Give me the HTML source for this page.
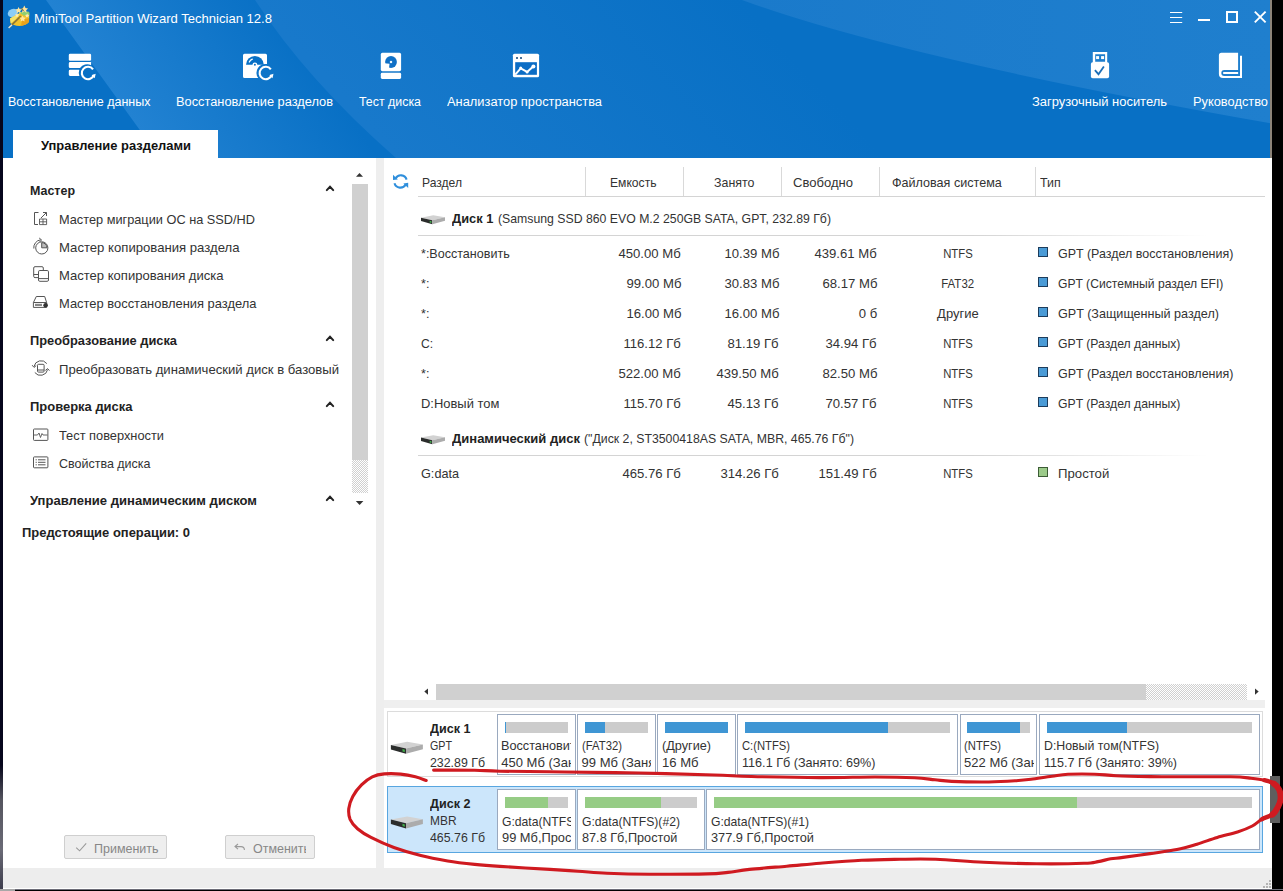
<!DOCTYPE html>
<html lang="ru"><head><meta charset="utf-8"><title>MiniTool Partition Wizard Technician 12.8</title>
<style>
html,body{margin:0;padding:0;}
body{width:1283px;height:891px;overflow:hidden;background:#000;position:relative;font-family:"Liberation Sans",sans-serif;}
.a{position:absolute;}
.t{position:absolute;white-space:pre;line-height:20px;height:20px;}
.clip{position:absolute;left:0;top:0;height:891px;overflow:hidden;}
#win{position:absolute;left:3px;top:0;width:1269px;height:888px;background:#fff;overflow:hidden;}
svg{position:absolute;overflow:visible;}
.pbox{position:absolute;box-sizing:border-box;border:1px solid #9aa9bf;background:#fff;}
.bar{position:absolute;height:11px;background:#ccc;}
.bar i{position:absolute;left:0;top:0;height:100%;display:block;}
.sq{position:absolute;left:1038px;width:8px;height:8px;border:1px solid #1d3c5c;background:#4a9bd6;}
.hl{position:absolute;height:1px;background:#d4d4d4;}
.vl{position:absolute;width:1px;background:#d9d9d9;top:167px;height:29px;}
</style></head><body>
<!-- left desktop strip -->
<div class="a" style="left:0;top:0;width:3px;height:891px;background:linear-gradient(#06061c 0,#06061c 765px,#55555f 800px,#6a6a76 850px,#3a3a4a 891px)"></div>
<!-- window -->
<div class="a" style="left:3px;top:0;width:1269px;height:889px;background:#fff"></div>
<div class="a" style="left:0;top:889px;width:1283px;height:1px;background:#6d6d78"></div>
<div class="a" style="left:0;top:889px;width:15px;height:2px;background:#a8a8a8"></div>
<!-- header -->
<svg style="left:3px;top:0" width="1269" height="158" viewBox="3 0 1269 158">
 <defs>
  <linearGradient id="g1" gradientUnits="userSpaceOnUse" x1="46" y1="0" x2="190" y2="-104"><stop offset="0" stop-color="#2282d2"/><stop offset="1" stop-color="#0870c5"/></linearGradient>
  <linearGradient id="g2" gradientUnits="userSpaceOnUse" x1="255" y1="0" x2="520" y2="-242"><stop offset="0" stop-color="#1879cb"/><stop offset="1" stop-color="#0870c5"/></linearGradient>
  <linearGradient id="g3" x1="0" y1="0" x2="1" y2="0"><stop offset="0" stop-color="#1a7acb"/><stop offset="1" stop-color="#1f7fce"/></linearGradient>
 </defs>
 <rect x="3" y="0" width="1269" height="158" fill="#0870c5"/>
 <path d="M46,0 L255,0 Q306,79 396,158 L160,158 Z" fill="url(#g1)"/>
 <path d="M255,0 Q306,79 396,158 L1272,158 L1272,0 Z" fill="url(#g2)"/>
 <path d="M742,0 Q900,58 1272,123.5 L1272,0 Z" fill="url(#g3)"/>
</svg>
<!-- tab -->
<div class="a" style="left:13px;top:130px;width:205px;height:29px;background:#fff"></div>
<!-- left/right divider -->
<div class="a" style="left:376px;top:158px;width:8px;height:710px;background:#eeeeee"></div>
<!-- status bar -->
<div class="a" style="left:3px;top:868px;width:1269px;height:20px;background:#ededed"></div>
<!-- sidebar scrollbar -->
<div class="a" style="left:352px;top:184px;width:16px;height:276px;background:#d0d0d0"></div>
<div class="a" style="left:352px;top:460px;width:16px;height:33px;background:repeating-conic-gradient(#d0d0d0 0% 25%,#fff 0% 50%) 0 0/2px 2px"></div>
<!-- buttons -->
<div class="a" style="left:64px;top:835px;width:103px;height:24px;box-sizing:border-box;border:1px solid #cfcfcf;background:#eee;border-radius:2px"></div>
<div class="a" style="left:225px;top:835px;width:90px;height:24px;box-sizing:border-box;border:1px solid #cfcfcf;background:#eee;border-radius:2px"></div>
<!-- table lines -->
<div class="hl" style="left:418px;top:196px;width:847px"></div>
<div class="hl" style="left:418px;top:235px;width:790px;background:linear-gradient(90deg,#d4d4d4 70%,#fff)"></div>
<div class="hl" style="left:418px;top:455px;width:790px;background:linear-gradient(90deg,#d4d4d4 70%,#fff)"></div>
<div class="vl" style="left:585px"></div><div class="vl" style="left:683px"></div><div class="vl" style="left:781px"></div><div class="vl" style="left:879px"></div><div class="vl" style="left:1035px"></div>
<!-- type squares -->
<div class="sq" style="top:247px"></div><div class="sq" style="top:277px"></div><div class="sq" style="top:307px"></div><div class="sq" style="top:337px"></div><div class="sq" style="top:367px"></div><div class="sq" style="top:397px"></div>
<div class="sq" style="top:467px;background:#9ccb8a;border-color:#3d5c36"></div>
<!-- h scrollbar -->
<div class="a" style="left:436px;top:684px;width:710px;height:16px;background:#d0d0d0"></div>
<div class="a" style="left:1146px;top:684px;width:101px;height:16px;background:repeating-conic-gradient(#d0d0d0 0% 25%,#fff 0% 50%) 0 0/2px 2px"></div>
<div class="a" style="left:384px;top:700px;width:881px;height:8px;background:#efefef"></div>
<!-- disk map: disk 1 -->
<div class="a" style="left:387px;top:711px;width:876px;height:66px;box-sizing:border-box;border:1px solid #dcdcdc;background:#fff"></div>
<div class="pbox" style="left:497px;top:714px;width:79px;height:61px"></div>
<div class="pbox" style="left:577px;top:714px;width:79px;height:61px"></div>
<div class="pbox" style="left:657px;top:714px;width:79px;height:61px"></div>
<div class="pbox" style="left:737px;top:714px;width:221px;height:61px"></div>
<div class="pbox" style="left:960px;top:714px;width:77px;height:61px"></div>
<div class="pbox" style="left:1039px;top:714px;width:221px;height:61px"></div>
<div class="bar" style="left:505px;top:722px;width:63px"><i style="width:1px;background:#3f96d4"></i></div>
<div class="bar" style="left:585px;top:722px;width:63px"><i style="width:20px;background:#3f96d4"></i></div>
<div class="bar" style="left:665px;top:722px;width:63px"><i style="width:63px;background:#3f96d4"></i></div>
<div class="bar" style="left:745px;top:722px;width:205px"><i style="width:143px;background:#3f96d4"></i></div>
<div class="bar" style="left:967px;top:722px;width:63px"><i style="width:53px;background:#3f96d4"></i></div>
<div class="bar" style="left:1047px;top:722px;width:205px"><i style="width:80px;background:#3f96d4"></i></div>
<!-- disk 2 -->
<div class="a" style="left:387px;top:786px;width:876px;height:67px;box-sizing:border-box;border:1px solid #58a6e0;background:#cce6fb"></div>
<div class="pbox" style="left:497px;top:789px;width:79px;height:61px"></div>
<div class="pbox" style="left:577px;top:789px;width:128px;height:61px"></div>
<div class="pbox" style="left:706px;top:789px;width:554px;height:61px"></div>
<div class="bar" style="left:505px;top:797px;width:63px"><i style="width:43px;background:#96cc85"></i></div>
<div class="bar" style="left:585px;top:797px;width:112px;"><i style="width:76px;background:#96cc85"></i></div>
<div class="bar" style="left:714px;top:797px;width:538px"><i style="width:363px;background:#96cc85"></i></div>
<!-- right-edge thumb on black -->
<div class="a" style="left:1270px;top:776px;width:10px;height:47px;background:#5e5e5e"></div>
<svg style="left:0;top:0" width="1283" height="891" viewBox="0 0 1283 891">
<defs>
 <!-- circular refresh arrow (white) centred at 0,0 ; outer r 7.3 -->
 <g id="carrow">
  <path d="M5.02,-3.64 A6.2,6.2 0 1 0 5.9,1.9" fill="none" stroke="#fff" stroke-width="2.1" stroke-linecap="butt"/>
  <path d="M3.6,2.2 L7.7,0.8 L6.7,5.3 Z" fill="#fff"/>
 </g>
 <!-- 3D disk icon, 32x12, origin at left corner top (0,3.1) -->
 <g id="hdd">
  <path d="M0,3.1 L16.3,0 L32,2.7 L15.1,6.7 Z" fill="#d2d2d2"/>
  <path d="M0,3.1 L15.1,6.7 L15.1,12 L0,7.6 Z" fill="#2b2d2c"/>
  <path d="M15.1,6.7 L32,2.7 L32,7.4 L15.1,12 Z" fill="#acacac"/>
  <path d="M11.6,7.3 L13.9,8 L13.9,10.3 L11.6,9.6 Z" fill="#42b14a"/>
 </g>
 <g id="chev"><path d="M-3.2,1.9 L0,-1.4 L3.2,1.9" fill="none" stroke="#222" stroke-width="2" stroke-linecap="round" stroke-linejoin="miter"/></g>
</defs>
<!-- app logo -->
<g>
 <ellipse cx="12.8" cy="13" rx="5.2" ry="4" fill="#8ccdf6" transform="rotate(-22 12.8 13)"/>
 <path d="M10,18.4 L17,14.5 L22,12 L29.4,12.6 L29,22 Q26,25.6 19.5,26 Q13,25.6 10.6,23 Z" fill="#f2c22a"/>
 <path d="M10,18.4 L17,14.5 L20.5,13 L16,19 L10.8,23.6 Z" fill="#f6e36a"/>
 <path d="M19,12.2 L28.5,11.5 L29.4,14.8 L24,15.8 Z" fill="#8fd070"/>
 <path d="M22,20 L29,18 L29,22 Q26.5,25 21,25.9 Z" fill="#e9a21c"/>
 <path d="M9,27.6 L20.8,16.1" stroke="#8a7434" stroke-width="1.6"/>
 <path d="M8.6,28 L12,24.7" stroke="#d8e6ee" stroke-width="1.3"/>
 <path d="M18.6,7 l1,2.1 2.2,.3 -1.6,1.6 .4,2.2 -2-1.1 -2,1.1 .4-2.2 -1.6-1.6 2.2-.3z" fill="#ffe6a0"/>
 <path d="M24.3,5.6 l1.2,2.4 2.6,.4 -1.9,1.8 .5,2.6 -2.4-1.3 -2.3,1.3 .4-2.6 -1.9-1.8 2.6-.4z" fill="#ffe39a"/>
 <path d="M22.6,15.4 l1,2 2.2,.3 -1.6,1.5 .4,2.2 -2-1 -2,1 .4-2.2 -1.6-1.5 2.2-.3z" fill="#ffe6a0"/>
 <path d="M17,13 l.7,1.4 1.5,.2 -1.1,1 .3,1.5 -1.4-.7 -1.3,.7 .2-1.5 -1.1-1 1.5-.2z" fill="#ffe9b0"/>
 <path d="M27.2,13.4 l.7,1.4 1.5,.2 -1.1,1 .3,1.5 -1.4-.7 -1.3,.7 .2-1.5 -1.1-1 1.5-.2z" fill="#ffe9b0"/>
 <path d="M21.5,8 L23.5,11" stroke="#3b4a2a" stroke-width="1.2" opacity=".7"/>
</g>
<!-- window controls -->
<g fill="#fff">
 <rect x="1170" y="12" width="12.2" height="1"/><rect x="1170" y="17" width="12.2" height="1"/><rect x="1170" y="22" width="12.2" height="1"/>
 <rect x="1198" y="19" width="12" height="2"/>
 <path d="M1226,11 h12 v12 h-12 z M1228,13 v8 h8 v-8 z" fill-rule="evenodd"/>
</g>
<path d="M1254.8,11.6 L1265.6,22.4 M1265.6,11.6 L1254.8,22.4" stroke="#fff" stroke-width="1.9"/>
<rect x="1270" y="0" width="2" height="158" fill="#8c8378"/>
<!-- toolbar icon 1: data recovery -->
<g fill="#fff">
 <rect x="68.8" y="53.8" width="22.3" height="7" rx="1.3"/>
 <path d="M70.1,62.1 H91.1 V65.2 A8.9,8.9 0 0 0 80.0,68.1 H70.1 A1.3,1.3 0 0 1 68.8,66.8 V63.4 A1.3,1.3 0 0 1 70.1,62.1 Z"/>
 <path d="M70.1,69.7 H79.3 A8.9,8.9 0 0 0 79.4,75.9 H70.1 A1.3,1.3 0 0 1 68.8,74.6 V71 A1.3,1.3 0 0 1 70.1,69.7 Z"/>
</g>
<use href="#carrow" x="88" y="73"/>
<!-- toolbar icon 2: partition recovery -->
<path d="M244.5,53.7 H265.5 A1.5,1.5 0 0 1 267,55.2 V64.1 A8.9,8.9 0 0 0 258.2,78 H244.5 A1.5,1.5 0 0 1 243,76.5 V55.2 A1.5,1.5 0 0 1 244.5,53.7 Z" fill="#fff"/>
<path d="M246,64.8 A8.9,8.9 0 0 1 263.8,64.8 Z" fill="#0870c5"/>
<circle cx="254.9" cy="64.8" r="2.4" fill="#fff"/><circle cx="254.9" cy="64.8" r="0.95" fill="#0870c5"/>
<path d="M249.3,62 A6,6 0 0 1 252.3,59.2" fill="none" stroke="#fff" stroke-width="1.3" stroke-linecap="round"/>
<use href="#carrow" x="265.8" y="73"/>
<!-- toolbar icon 3: disk test -->
<rect x="380.8" y="52.8" width="20.3" height="18.4" rx="1.6" fill="#fff"/>
<rect x="380.8" y="72.8" width="20.3" height="6.2" rx="1.4" fill="#fff"/>
<circle cx="391" cy="62" r="5.9" fill="#0f70c6"/>
<path d="M389.5,63.8 L384,63.3 L384,69.5 L388.9,69.5 Z" fill="#fff"/>
<rect x="389.9" y="60.9" width="2.2" height="2.2" fill="#e8f6ff"/>
<!-- toolbar icon 4: analyzer -->
<rect x="512.9" y="53.7" width="26.2" height="23.6" rx="1.6" fill="#fff"/>
<rect x="515.2" y="62.2" width="21.7" height="12.6" fill="#0c6dc5"/>
<rect x="516.1" y="57.1" width="1.8" height="1.8" fill="#1c4f80"/><rect x="520.1" y="57.1" width="1.8" height="1.8" fill="#1c4f80"/>
<path d="M515.2,74.6 L520.7,68.3 L527.1,71.9 L533.2,66.5" fill="none" stroke="#fff" stroke-width="2" stroke-linejoin="round"/>
<circle cx="520.7" cy="68.1" r="1.5" fill="#fff"/><circle cx="527.1" cy="71.9" r="1.5" fill="#fff"/><circle cx="533.4" cy="66.4" r="2" fill="#fff"/>
<!-- toolbar icon 5: usb -->
<path d="M1092.8,52 H1107.2 V63 H1092.8 Z M1095.2,54.2 V61.8 H1105.1 V54.2 Z" fill="#fff" fill-rule="evenodd"/>
<rect x="1096.1" y="56.1" width="3" height="3" fill="#fff"/><rect x="1101.1" y="56.1" width="3" height="3" fill="#fff"/>
<rect x="1090.9" y="62.2" width="18.2" height="16.1" rx="1.8" fill="#fff"/>
<path d="M1094.9,70.2 L1098.5,74.2 L1103.9,66.5" fill="none" stroke="#1d6fb8" stroke-width="1.8"/>
<!-- toolbar icon 6: book -->
<path d="M1221.4,52.8 H1238.1 V69.9 H1224.3 A3,3 0 0 0 1224.3,75.9 H1240 V55.8 H1242 V78 H1223 A4.1,4.1 0 0 1 1218.9,73.9 V55.3 A2.5,2.5 0 0 1 1221.4,52.8 Z" fill="#fff"/>
<path d="M1223.9,72.1 H1238.1 V74 H1223.9 A0.95,0.95 0 0 1 1223.9,72.1 Z" fill="#fff"/>
<!-- sidebar chevrons -->
<use href="#chev" x="330" y="188.2"/><use href="#chev" x="330" y="338.2"/><use href="#chev" x="330" y="404.2"/><use href="#chev" x="330" y="498.2"/>
<!-- sidebar scrollbar arrows -->
<path d="M356,176.8 L359.5,173 L363,176.8 Z" fill="#333"/>
<path d="M355.8,501 L363.4,501 L359.6,505 Z" fill="#333"/>
<!-- sidebar icons -->
<g fill="none" stroke="#555" stroke-width="1">
 <!-- migrate -->
 <path d="M38.5,212.5 H34.5 V224.5 H38"/>
 <path d="M41,218 L46.4,212.6 M43,212.5 H46.5 V216"/>
 <path d="M39.5,219 H46.6 V224.6 H39.5 Z M43,219 V224.6 M39.5,221.8 H46.6" stroke-width=".9"/>
 <!-- copy partition -->
 <circle cx="41.8" cy="247.9" r="6.1"/>
 <path d="M41.7,247.8 V242.6 A5.3,5.3 0 0 1 47,247.8 Z" fill="#bbb"/>
 <path d="M33.8,248.5 A8,8 0 0 1 40.5,239.8"/>
 <path d="M39.2,238 L41.6,240 L39.4,242" />
 <!-- copy disk -->
 <path d="M38,277.6 H35 A1.3,1.3 0 0 1 33.7,276.3 V268 A1.3,1.3 0 0 1 35,266.7 H42 A1.3,1.3 0 0 1 43.3,268 V270"/>
 <path d="M33.7,274.5 H38"/>
 <rect x="38.5" y="270.5" width="10" height="10.8" rx="1.3"/>
 <path d="M38.5,278.6 H48.5"/>
 <!-- partition recovery -->
 <path d="M36.3,296.5 H44.7 L46.6,302.5 V307.4 H33.4 V302.5 Z M33.4,302.5 H46.6"/>
 <path d="M35,304.9 H42" stroke="#888" stroke-width="2.2"/>
 <circle cx="45.6" cy="305.2" r="2.3" fill="#333" stroke="none"/>
 <!-- convert -->
 <path d="M34,366.5 A7.2,7.2 0 0 1 46.8,363.6"/>
 <path d="M47.6,369.6 A7.2,7.2 0 0 1 34.8,372.5"/>
 <path d="M32.2,365.2 L34,367.4 L36.2,365.6"/>
 <path d="M49.4,370.6 L47.6,368.6 L45.4,370.4"/>
 <rect x="37.5" y="364.3" width="6.6" height="7.8" rx="1"/>
 <path d="M37.5,370 H44.1"/>
 <!-- surface test -->
 <rect x="33.5" y="429" width="14.4" height="11.4" rx=".8"/>
 <path d="M34,435 H37.5 L39,433 L40.5,437.5 L42,433.5 L43,435 H47.5" stroke-width=".9"/>
 <!-- properties -->
 <rect x="33.5" y="456.9" width="14.4" height="10.9" rx=".8"/>
 <path d="M38,459.8 H45.5 M38,462.3 H45.5 M38,464.8 H45.5 M35.6,459.8 H36.8 M35.6,462.3 H36.8 M35.6,464.8 H36.8"/>
</g>
<!-- button icons -->
<path d="M76.2,847.6 L79.6,850.8 L86.2,843.3" fill="none" stroke="#9a9a9a" stroke-width="1.1"/>
<path d="M238,844 L235,846.6 L238,849.2 M235.2,846.6 H241 A3.4,3.4 0 0 1 244.4,850" fill="none" stroke="#9a9a9a" stroke-width="1.1"/>
<!-- refresh icon -->
<g fill="none" stroke="#2f8fdc" stroke-width="2.1">
 <path d="M395.6,178.4 A6,6 0 0 1 406.6,179.6"/>
 <path d="M405.6,184.4 A6,6 0 0 1 394.5,183.3"/>
</g>
<path d="M393,174.8 L393,180 L397.8,179.4 Z" fill="#2f8fdc"/>
<path d="M408.2,188 L408.2,182.8 L403.4,183.4 Z" fill="#2f8fdc"/>
<!-- table disk icons (24x9) -->
<use href="#hdd" transform="translate(421,215.3) scale(.75)"/>
<use href="#hdd" transform="translate(421,435.3) scale(.75)"/>
<!-- disk map disk icons -->
<use href="#hdd" x="390.9" y="741.8"/>
<use href="#hdd" x="390.9" y="816.5"/>
<!-- h scrollbar arrows -->
<path d="M428,688.4 L424.3,691.6 L428,694.8 Z" fill="#333"/>
<path d="M1255,688.4 L1258.7,691.6 L1255,694.8 Z" fill="#333"/>
<!-- resize grip -->
<g fill="#b4b4b4">
 <rect x="1269" y="880" width="2" height="2"/>
 <rect x="1266" y="883" width="2" height="2"/><rect x="1269" y="883" width="2" height="2"/>
 <rect x="1263" y="886" width="2" height="2"/><rect x="1266" y="886" width="2" height="2"/><rect x="1269" y="886" width="2" height="2"/>
</g>
</svg>

<span class="t" style="top:9.23px;font-size:13.2px;color:#fff;left:33.70px;transform:scaleX(0.9909);transform-origin:0 0;">MiniTool Partition Wizard Technician 12.8</span>
<span class="t" style="top:92.47px;font-size:12.5px;color:#fff;left:7.60px;transform:scaleX(1.0008);transform-origin:0 0;">Восстановление данных</span>
<span class="t" style="top:92.47px;font-size:12.5px;color:#fff;left:176.10px;transform:scaleX(1.0250);transform-origin:0 0;">Восстановление разделов</span>
<span class="t" style="top:92.47px;font-size:12.5px;color:#fff;left:359.10px;transform:scaleX(0.9910);transform-origin:0 0;">Тест диска</span>
<span class="t" style="top:92.47px;font-size:12.5px;color:#fff;left:447.10px;transform:scaleX(1.0283);transform-origin:0 0;">Анализатор пространства</span>
<span class="t" style="top:92.47px;font-size:12.5px;color:#fff;left:1032.30px;transform:scaleX(1.0363);transform-origin:0 0;">Загрузочный носитель</span>
<span class="t" style="top:92.47px;font-size:12.5px;color:#fff;left:1193.30px;transform:scaleX(1.0267);transform-origin:0 0;">Руководство</span>
<span class="t" style="top:136.30px;font-size:13px;color:#111;font-weight:700;left:40.50px;transform:scaleX(0.9946);transform-origin:0 0;">Управление разделами</span>
<span class="t" style="top:181.20px;font-size:13px;color:#222;font-weight:700;left:29.70px;transform:scaleX(0.9574);transform-origin:0 0;">Мастер</span>
<span class="t" style="top:210.20px;font-size:13px;color:#333;left:58.70px;transform:scaleX(0.9808);transform-origin:0 0;">Мастер миграции ОС на SSD/HD</span>
<span class="t" style="top:238.20px;font-size:13px;color:#333;left:58.70px;transform:scaleX(1.0101);transform-origin:0 0;">Мастер копирования раздела</span>
<span class="t" style="top:266.20px;font-size:13px;color:#333;left:58.70px;transform:scaleX(1.0028);transform-origin:0 0;">Мастер копирования диска</span>
<span class="t" style="top:294.20px;font-size:13px;color:#333;left:58.70px;transform:scaleX(0.9938);transform-origin:0 0;">Мастер восстановления раздела</span>
<span class="t" style="top:331.20px;font-size:13px;color:#222;font-weight:700;left:29.70px;transform:scaleX(0.9876);transform-origin:0 0;">Преобразование диска</span>
<span class="t" style="top:360.20px;font-size:13px;color:#333;left:58.70px;transform:scaleX(1.0086);transform-origin:0 0;">Преобразовать динамический диск в базовый</span>
<span class="t" style="top:397.20px;font-size:13px;color:#222;font-weight:700;left:29.70px;transform:scaleX(0.9973);transform-origin:0 0;">Проверка диска</span>
<span class="t" style="top:426.20px;font-size:13px;color:#333;left:58.70px;transform:scaleX(0.9861);transform-origin:0 0;">Тест поверхности</span>
<span class="t" style="top:454.20px;font-size:13px;color:#333;left:58.70px;transform:scaleX(0.9606);transform-origin:0 0;">Свойства диска</span>
<span class="t" style="top:491.20px;font-size:13px;color:#222;font-weight:700;left:29.70px;transform:scaleX(1.0038);transform-origin:0 0;">Управление динамическим диском</span>
<span class="t" style="top:523.20px;font-size:13px;color:#222;font-weight:700;left:21.60px;transform:scaleX(0.9968);transform-origin:0 0;">Предстоящие операции: 0</span>
<span class="t" style="top:839.30px;font-size:13px;color:#878787;left:93.50px;transform:scaleX(0.9602);transform-origin:0 0;">Применить</span>
<div class="clip" style="width:305.8px"><span class="t" style="top:839.30px;font-size:13px;color:#878787;left:252.50px;transform:scaleX(0.9595);transform-origin:0 0;">Отменить</span></div>
<span class="t" style="top:173.00px;font-size:13px;color:#333;left:421.80px;transform:scaleX(0.9309);transform-origin:0 0;">Раздел</span>
<span class="t" style="top:173.00px;font-size:13px;color:#333;left:609.60px;transform:scaleX(0.9317);transform-origin:0 0;">Емкость</span>
<span class="t" style="top:173.00px;font-size:13px;color:#333;left:714.10px;transform:scaleX(0.9541);transform-origin:0 0;">Занято</span>
<span class="t" style="top:173.00px;font-size:13px;color:#333;left:792.60px;transform:scaleX(1.0039);transform-origin:0 0;">Свободно</span>
<span class="t" style="top:173.00px;font-size:13px;color:#333;left:892.10px;transform:scaleX(0.9678);transform-origin:0 0;">Файловая система</span>
<span class="t" style="top:173.00px;font-size:13px;color:#333;left:1040.40px;transform:scaleX(0.9552);transform-origin:0 0;">Тип</span>
<span class="t" style="top:209.30px;font-size:13px;color:#222;font-weight:700;left:452.10px;transform:scaleX(0.9870);transform-origin:0 0;">Диск 1</span>
<span class="t" style="top:209.30px;font-size:13px;color:#333;left:497.90px;transform:scaleX(0.9436);transform-origin:0 0;">(Samsung SSD 860 EVO M.2 250GB SATA, GPT, 232.89 Гб)</span>
<span class="t" style="top:429.30px;font-size:13px;color:#222;font-weight:700;left:452.10px;transform:scaleX(1.0010);transform-origin:0 0;">Динамический диск</span>
<span class="t" style="top:429.30px;font-size:13px;color:#333;left:583.60px;transform:scaleX(0.9453);transform-origin:0 0;">(&quot;Диск 2, ST3500418AS SATA, MBR, 465.76 Гб&quot;)</span>
<span class="t" style="top:244.30px;font-size:13px;color:#333;left:420.80px;transform:scaleX(0.9650);transform-origin:0 0;">*:Восстановить</span>
<span class="t" style="top:244.30px;font-size:13px;color:#333;left:619.44px;transform:scaleX(1.0100);transform-origin:100% 0;">450.00 Мб</span>
<span class="t" style="top:244.30px;font-size:13px;color:#333;left:724.68px;transform:scaleX(1.0100);transform-origin:100% 0;">10.39 Мб</span>
<span class="t" style="top:244.30px;font-size:13px;color:#333;left:815.44px;transform:scaleX(1.0100);transform-origin:100% 0;">439.61 Мб</span>
<span class="t" style="top:244.30px;font-size:13px;color:#333;left:940.92px;transform:scaleX(0.8700);transform-origin:50% 0;">NTFS</span>
<span class="t" style="top:244.30px;font-size:13px;color:#333;left:1057.60px;transform:scaleX(0.9600);transform-origin:0 0;">GPT (Раздел восстановления)</span>
<span class="t" style="top:274.30px;font-size:13px;color:#333;left:420.80px;transform:scaleX(0.9650);transform-origin:0 0;">*:</span>
<span class="t" style="top:274.30px;font-size:13px;color:#333;left:626.68px;transform:scaleX(1.0100);transform-origin:100% 0;">99.00 Мб</span>
<span class="t" style="top:274.30px;font-size:13px;color:#333;left:724.68px;transform:scaleX(1.0100);transform-origin:100% 0;">30.83 Мб</span>
<span class="t" style="top:274.30px;font-size:13px;color:#333;left:822.68px;transform:scaleX(1.0100);transform-origin:100% 0;">68.17 Мб</span>
<span class="t" style="top:274.30px;font-size:13px;color:#333;left:939.23px;transform:scaleX(0.8820);transform-origin:50% 0;">FAT32</span>
<span class="t" style="top:274.30px;font-size:13px;color:#333;left:1057.60px;transform:scaleX(0.9340);transform-origin:0 0;">GPT (Системный раздел EFI)</span>
<span class="t" style="top:304.30px;font-size:13px;color:#333;left:420.80px;transform:scaleX(0.9650);transform-origin:0 0;">*:</span>
<span class="t" style="top:304.30px;font-size:13px;color:#333;left:626.68px;transform:scaleX(1.0100);transform-origin:100% 0;">16.00 Мб</span>
<span class="t" style="top:304.30px;font-size:13px;color:#333;left:724.68px;transform:scaleX(1.0100);transform-origin:100% 0;">16.00 Мб</span>
<span class="t" style="top:304.30px;font-size:13px;color:#333;left:858.80px;transform:scaleX(1.0100);transform-origin:100% 0;">0 б</span>
<span class="t" style="top:304.30px;font-size:13px;color:#333;left:937.09px;transform:scaleX(1.0000);transform-origin:50% 0;">Другие</span>
<span class="t" style="top:304.30px;font-size:13px;color:#333;left:1057.60px;transform:scaleX(0.9690);transform-origin:0 0;">GPT (Защищенный раздел)</span>
<span class="t" style="top:334.30px;font-size:13px;color:#333;left:420.80px;transform:scaleX(0.9300);transform-origin:0 0;">C:</span>
<span class="t" style="top:334.30px;font-size:13px;color:#333;left:624.19px;transform:scaleX(1.0100);transform-origin:100% 0;">116.12 Гб</span>
<span class="t" style="top:334.30px;font-size:13px;color:#333;left:728.46px;transform:scaleX(1.0100);transform-origin:100% 0;">81.19 Гб</span>
<span class="t" style="top:334.30px;font-size:13px;color:#333;left:826.46px;transform:scaleX(1.0100);transform-origin:100% 0;">34.94 Гб</span>
<span class="t" style="top:334.30px;font-size:13px;color:#333;left:940.92px;transform:scaleX(0.8700);transform-origin:50% 0;">NTFS</span>
<span class="t" style="top:334.30px;font-size:13px;color:#333;left:1057.60px;transform:scaleX(0.9390);transform-origin:0 0;">GPT (Раздел данных)</span>
<span class="t" style="top:364.30px;font-size:13px;color:#333;left:420.80px;transform:scaleX(0.9650);transform-origin:0 0;">*:</span>
<span class="t" style="top:364.30px;font-size:13px;color:#333;left:619.44px;transform:scaleX(1.0100);transform-origin:100% 0;">522.00 Мб</span>
<span class="t" style="top:364.30px;font-size:13px;color:#333;left:717.44px;transform:scaleX(1.0100);transform-origin:100% 0;">439.50 Мб</span>
<span class="t" style="top:364.30px;font-size:13px;color:#333;left:822.68px;transform:scaleX(1.0100);transform-origin:100% 0;">82.50 Мб</span>
<span class="t" style="top:364.30px;font-size:13px;color:#333;left:940.92px;transform:scaleX(0.8700);transform-origin:50% 0;">NTFS</span>
<span class="t" style="top:364.30px;font-size:13px;color:#333;left:1057.60px;transform:scaleX(0.9600);transform-origin:0 0;">GPT (Раздел восстановления)</span>
<span class="t" style="top:394.30px;font-size:13px;color:#333;left:420.80px;transform:scaleX(0.9950);transform-origin:0 0;">D:Новый том</span>
<span class="t" style="top:394.30px;font-size:13px;color:#333;left:624.19px;transform:scaleX(1.0100);transform-origin:100% 0;">115.70 Гб</span>
<span class="t" style="top:394.30px;font-size:13px;color:#333;left:728.46px;transform:scaleX(1.0100);transform-origin:100% 0;">45.13 Гб</span>
<span class="t" style="top:394.30px;font-size:13px;color:#333;left:826.46px;transform:scaleX(1.0100);transform-origin:100% 0;">70.57 Гб</span>
<span class="t" style="top:394.30px;font-size:13px;color:#333;left:940.92px;transform:scaleX(0.8700);transform-origin:50% 0;">NTFS</span>
<span class="t" style="top:394.30px;font-size:13px;color:#333;left:1057.60px;transform:scaleX(0.9390);transform-origin:0 0;">GPT (Раздел данных)</span>
<span class="t" style="top:464.30px;font-size:13px;color:#333;left:420.80px;transform:scaleX(0.9750);transform-origin:0 0;">G:data</span>
<span class="t" style="top:464.30px;font-size:13px;color:#333;left:623.24px;transform:scaleX(1.0100);transform-origin:100% 0;">465.76 Гб</span>
<span class="t" style="top:464.30px;font-size:13px;color:#333;left:721.24px;transform:scaleX(1.0100);transform-origin:100% 0;">314.26 Гб</span>
<span class="t" style="top:464.30px;font-size:13px;color:#333;left:819.24px;transform:scaleX(1.0100);transform-origin:100% 0;">151.49 Гб</span>
<span class="t" style="top:464.30px;font-size:13px;color:#333;left:940.92px;transform:scaleX(0.8700);transform-origin:50% 0;">NTFS</span>
<span class="t" style="top:464.30px;font-size:13px;color:#333;left:1057.60px;transform:scaleX(1.0140);transform-origin:0 0;">Простой</span>
<span class="t" style="top:719.10px;font-size:13px;color:#222;font-weight:700;left:430.00px;transform:scaleX(0.9679);transform-origin:0 0;">Диск 1</span>
<span class="t" style="top:736.30px;font-size:13px;color:#333;left:430.00px;transform:scaleX(0.8229);transform-origin:0 0;">GPT</span>
<span class="t" style="top:752.80px;font-size:13px;color:#333;left:430.00px;transform:scaleX(0.9506);transform-origin:0 0;">232.89 Гб</span>
<span class="t" style="top:794.00px;font-size:13px;color:#222;font-weight:700;left:430.00px;transform:scaleX(0.9679);transform-origin:0 0;">Диск 2</span>
<span class="t" style="top:811.30px;font-size:13px;color:#333;left:430.00px;transform:scaleX(0.9173);transform-origin:0 0;">MBR</span>
<span class="t" style="top:828.20px;font-size:13px;color:#333;left:430.00px;transform:scaleX(0.9506);transform-origin:0 0;">465.76 Гб</span>
<div class="clip" style="width:571.0px"><span class="t" style="top:736.30px;font-size:13px;color:#333;left:501.30px;transform:scaleX(0.9750);transform-origin:0 0;">Восстановить(NTFS)</span></div>
<div class="clip" style="width:571.0px"><span class="t" style="top:752.80px;font-size:13px;color:#333;left:501.30px;transform:scaleX(1.0000);transform-origin:0 0;">450 Мб (Занято: 2%)</span></div>
<div class="clip" style="width:651.4px"><span class="t" style="top:736.30px;font-size:13px;color:#333;left:581.60px;transform:scaleX(0.8696);transform-origin:0 0;">(FAT32)</span></div>
<div class="clip" style="width:651.4px"><span class="t" style="top:752.80px;font-size:13px;color:#333;left:581.60px;transform:scaleX(1.0000);transform-origin:0 0;">99 Мб (Занято: 31%)</span></div>
<div class="clip" style="width:731.0px"><span class="t" style="top:736.30px;font-size:13px;color:#333;left:661.60px;transform:scaleX(0.9745);transform-origin:0 0;">(Другие)</span></div>
<div class="clip" style="width:731.0px"><span class="t" style="top:752.80px;font-size:13px;color:#333;left:661.60px;transform:scaleX(1.0066);transform-origin:0 0;">16 Мб</span></div>
<div class="clip" style="width:952.0px"><span class="t" style="top:736.30px;font-size:13px;color:#333;left:741.60px;transform:scaleX(0.8632);transform-origin:0 0;">C:(NTFS)</span></div>
<div class="clip" style="width:952.0px"><span class="t" style="top:752.80px;font-size:13px;color:#333;left:741.60px;transform:scaleX(0.9708);transform-origin:0 0;">116.1 Гб (Занято: 69%)</span></div>
<div class="clip" style="width:1033.7px"><span class="t" style="top:736.30px;font-size:13px;color:#333;left:964.10px;transform:scaleX(0.8684);transform-origin:0 0;">(NTFS)</span></div>
<div class="clip" style="width:1033.7px"><span class="t" style="top:752.80px;font-size:13px;color:#333;left:964.10px;transform:scaleX(1.0000);transform-origin:0 0;">522 Мб (Занято: 84%)</span></div>
<div class="clip" style="width:1256.0px"><span class="t" style="top:736.30px;font-size:13px;color:#333;left:1043.80px;transform:scaleX(0.9478);transform-origin:0 0;">D:Новый том(NTFS)</span></div>
<div class="clip" style="width:1256.0px"><span class="t" style="top:752.80px;font-size:13px;color:#333;left:1043.80px;transform:scaleX(0.9672);transform-origin:0 0;">115.7 Гб (Занято: 39%)</span></div>
<div class="clip" style="width:571.0px"><span class="t" style="top:812.10px;font-size:13px;color:#333;left:501.80px;transform:scaleX(0.9356);transform-origin:0 0;">G:data(NTFS)(#3)</span></div>
<div class="clip" style="width:571.0px"><span class="t" style="top:828.40px;font-size:13px;color:#333;left:501.80px;transform:scaleX(0.9880);transform-origin:0 0;">99 Мб,Простой</span></div>
<div class="clip" style="width:700.0px"><span class="t" style="top:812.10px;font-size:13px;color:#333;left:581.80px;transform:scaleX(0.9356);transform-origin:0 0;">G:data(NTFS)(#2)</span></div>
<div class="clip" style="width:700.0px"><span class="t" style="top:828.40px;font-size:13px;color:#333;left:581.80px;transform:scaleX(0.9762);transform-origin:0 0;">87.8 Гб,Простой</span></div>
<div class="clip" style="width:1256.0px"><span class="t" style="top:812.10px;font-size:13px;color:#333;left:710.60px;transform:scaleX(0.9356);transform-origin:0 0;">G:data(NTFS)(#1)</span></div>
<div class="clip" style="width:1256.0px"><span class="t" style="top:828.40px;font-size:13px;color:#333;left:710.60px;transform:scaleX(0.9823);transform-origin:0 0;">377.9 Гб,Простой</span></div>
<!-- red annotation -->
<svg style="left:0;top:0" width="1283" height="891" viewBox="0 0 1283 891">
<g fill="none" stroke="#cf1a20" stroke-linejoin="round" stroke-linecap="round">
<path d="M433.6,770.1 C440.5,770.1 463.6,770.0 474.7,770.2 C485.8,770.4 485.0,770.9 500.0,771.2 C515.0,771.5 541.3,771.7 564.5,772.0 C587.7,772.3 614.1,772.5 639.0,773.0 C663.9,773.5 695.2,774.4 714.0,775.0 C732.8,775.6 733.8,776.1 751.5,776.5 C769.2,776.9 799.4,777.5 820.0,777.6 C840.6,777.7 859.2,777.0 875.0,777.0 C890.8,777.0 904.6,777.3 914.6,777.8 C924.6,778.3 928.8,779.2 935.0,779.8 C941.2,780.4 942.7,781.0 951.7,781.4 C960.7,781.8 978.2,782.1 988.8,782.0 C999.3,781.9 1008.0,781.3 1015.0,780.8 C1022.0,780.3 1024.8,780.0 1031.0,779.2 C1037.2,778.4 1045.8,777.0 1052.0,776.2 C1058.2,775.4 1060.9,774.6 1068.0,774.3 C1075.1,774.0 1086.7,774.0 1094.7,774.2 C1102.7,774.4 1106.8,775.3 1116.0,775.7 C1125.2,776.1 1139.8,776.4 1150.0,776.6 C1160.2,776.8 1163.5,776.8 1176.9,776.8 C1190.4,776.8 1218.4,776.6 1230.7,776.8 C1243.0,777.0 1245.4,777.6 1251.0,778.2 C1256.6,778.8 1260.6,779.3 1264.4,780.2 C1268.2,781.1 1271.3,782.0 1273.8,783.6 C1276.3,785.2 1278.1,787.0 1279.2,789.6 C1280.3,792.2 1280.8,796.1 1280.6,799.0 C1280.4,801.9 1279.2,804.5 1277.9,807.1 C1276.6,809.7 1275.2,812.5 1272.5,814.5 C1269.8,816.5 1265.1,817.4 1261.7,819.3 C1258.3,821.2 1256.3,823.9 1252.3,826.0 C1248.3,828.1 1243.3,830.1 1237.5,832.0 C1231.7,833.9 1224.0,835.4 1217.3,837.4 C1210.5,839.4 1203.7,842.2 1197.0,844.2 C1190.3,846.2 1184.7,848.0 1176.9,849.6 C1169.1,851.2 1159.0,852.3 1150.0,853.6 C1141.0,854.9 1129.5,856.5 1123.0,857.4 C1116.5,858.3 1114.9,858.1 1110.7,858.8 C1106.5,859.5 1102.5,860.9 1098.0,861.6 C1093.5,862.4 1094.2,862.9 1084.0,863.3 C1073.8,863.7 1053.2,864.0 1036.5,863.8 C1019.8,863.6 1000.3,863.0 983.5,862.3 C966.7,861.5 949.7,859.8 935.8,859.3 C921.9,858.8 912.4,859.1 900.0,859.3 C887.6,859.5 874.9,859.6 861.6,860.3 C848.3,860.9 832.5,862.2 820.0,863.2 C807.5,864.2 798.6,865.2 786.8,866.2 C775.0,867.2 759.2,868.4 749.4,869.4 C739.6,870.4 735.1,871.6 728.0,872.4 C720.9,873.1 720.0,873.6 707.0,873.9 C694.0,874.2 666.4,874.3 649.7,874.2 C633.0,874.1 619.0,873.7 607.0,873.2 C595.0,872.7 587.5,871.8 578.0,871.2 C568.5,870.6 563.0,870.2 550.0,869.4 C537.0,868.6 512.5,867.2 500.0,866.4 C487.4,865.6 483.4,865.3 474.7,864.4 C466.0,863.5 456.7,862.5 447.7,861.0 C438.7,859.5 429.8,857.9 420.8,855.6 C411.8,853.4 402.2,850.5 393.9,847.5 C385.6,844.5 377.1,840.5 371.0,837.4 C364.9,834.3 361.0,831.7 357.5,828.7 C354.0,825.7 351.6,822.7 350.1,819.3 C348.7,815.9 348.4,812.3 348.8,808.5 C349.2,804.7 350.7,800.3 352.8,796.4 C354.9,792.5 358.2,788.2 361.5,784.9 C364.8,781.6 368.5,778.6 372.3,776.8 C376.1,775.0 379.7,774.3 384.4,773.9 C389.1,773.5 395.4,773.6 400.6,774.1 C405.8,774.6 411.1,775.7 415.4,776.8 C419.7,777.9 424.4,779.9 426.2,780.5" stroke-width="3.1"/>
<path d="M1264.4,780.2 C1268.2,781.1 1271.3,782.0 1273.8,783.6 C1276.3,785.2 1278.1,787.0 1279.2,789.6 C1280.3,792.2 1280.8,796.1 1280.6,799.0 C1280.4,801.9 1279.2,804.5 1277.9,807.1 C1276.6,809.7 1275.2,812.5 1272.5,814.5 C1269.8,816.5 1265.1,817.4 1261.7,819.3" stroke-width="4.4"/>
<path d="M1273.8,783.6 C1276.3,785.2 1278.1,787.0 1279.2,789.6 C1280.3,792.2 1280.8,796.1 1280.6,799.0 C1280.4,801.9 1279.2,804.5 1277.9,807.1 C1276.6,809.7 1275.2,812.5 1272.5,814.5" stroke-width="6"/>
</g>
</svg>
</body></html>
